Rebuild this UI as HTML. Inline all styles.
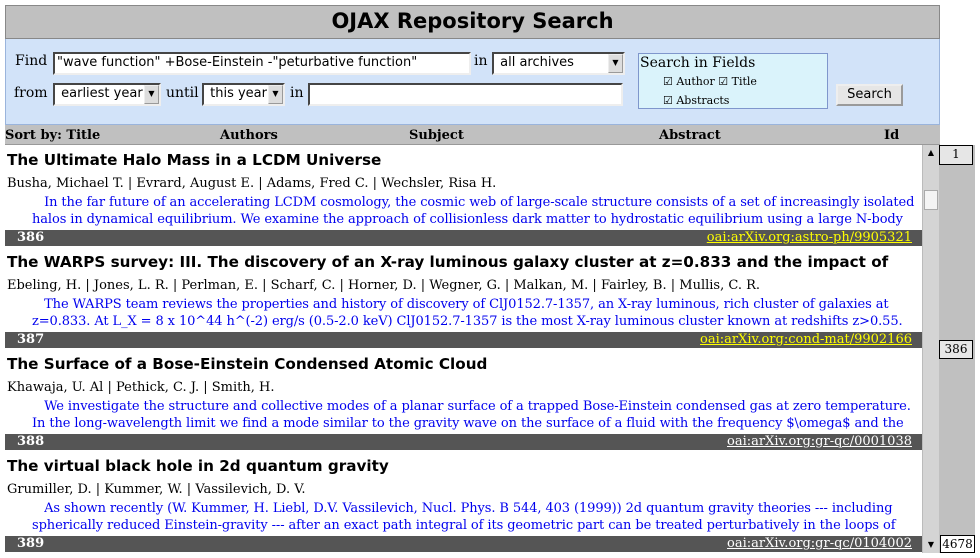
<!DOCTYPE html>
<html><head><meta charset="utf-8"><style>
*{margin:0;padding:0;box-sizing:border-box}
body{width:980px;height:558px;background:#fff;position:relative;overflow:hidden;font-family:"DejaVu Serif","Liberation Serif",serif;font-size:13px;color:#000}
.a{position:absolute;white-space:nowrap}
#hdr{left:5px;top:5px;width:935px;height:34px;background:#c0c0c0;border:1px solid #888;text-align:center;font:bold 21px "DejaVu Sans",sans-serif;line-height:31px}
#form{left:5px;top:39px;width:935px;height:86px;background:#d2e3f9;border:1px solid #9ab4dc;border-top:none}
.inp{position:absolute;background:#fff;border:2px inset #999;border-right-color:#eee;border-bottom-color:#eee;font:13px "DejaVu Sans",sans-serif;line-height:17px;padding-left:2px;white-space:nowrap;overflow:hidden}
.arr{position:absolute;right:0;top:0;width:15px;height:100%;background:#ddd;border:1px outset #eee;font-size:8px;text-align:center;line-height:16px}
.lbl{position:absolute;font-size:14px}
#sort{left:5px;top:125px;width:935px;height:20px;background:#c0c0c0;border-bottom:1px solid #999;font-weight:bold;font-size:13px}
#sort span{position:absolute;top:3px}
#res{left:5px;top:146px;width:917px;height:407px;overflow:hidden;background:#fff}
.rec{position:absolute;left:0;width:917px;height:103px}
.t{position:absolute;left:2px;top:5px;font:bold 15.2px "DejaVu Sans",sans-serif;white-space:nowrap}
.au{position:absolute;left:2px;top:30px;font-size:13px;white-space:nowrap}
.ab{position:absolute;left:27px;top:48px;color:#00e;font-size:13px;line-height:17px;white-space:nowrap;letter-spacing:-0.1px}
.bar{position:absolute;left:0;top:84px;width:917px;height:16px;background:#555;color:#fff}
.bar b{position:absolute;left:12px;top:0;font-size:13px;line-height:16px}
.bar u{position:absolute;right:10px;top:0;color:#ff0;font-size:13px;line-height:16px}
#sb{left:922px;top:145px;width:17px;height:408px;background:#d4d4d4;border-left:1px solid #bbb}
#rp{left:939px;top:145px;width:36px;height:408px;background:#c0c0c0}
.pg{position:absolute;background:#e6e6e6;border:1px solid #000;font-size:12px;text-align:center;line-height:17px}
</style></head><body>
<div class="a" id="hdr">OJAX Repository Search</div>
<div class="a" id="form">
 <div class="lbl" style="left:9px;top:14px">Find</div>
 <div class="inp" style="left:47px;top:13px;width:418px;height:23px">"wave function" +Bose-Einstein -"peturbative function"</div>
 <div class="lbl" style="left:468px;top:14px">in</div>
 <div class="inp" style="left:486px;top:13px;width:133px;height:23px">&nbsp;all archives<div class="arr">▼</div></div>
 <div class="lbl" style="left:8px;top:46px">from</div>
 <div class="inp" style="left:47px;top:44px;width:108px;height:23px">&nbsp;earliest year<div class="arr">▼</div></div>
 <div class="lbl" style="left:160px;top:46px">until</div>
 <div class="inp" style="left:196px;top:44px;width:83px;height:23px">&nbsp;this year<div class="arr">▼</div></div>
 <div class="lbl" style="left:284px;top:46px">in</div>
 <div class="inp" style="left:302px;top:44px;width:315px;height:23px"></div>
 <div style="position:absolute;left:632px;top:14px;width:190px;height:56px;background:#daf3fb;border:1px solid #7f96cc">
  <div style="position:absolute;left:1px;top:1px;font-size:14px">Search in Fields</div>
  <div style="position:absolute;left:24px;top:21px;font-size:11px">☑ Author ☑ Title</div>
  <div style="position:absolute;left:24px;top:40px;font-size:11px">☑ Abstracts</div>
 </div>
 <div style="position:absolute;left:830px;top:45px;width:67px;height:22px;background:#e6e6e6;border:2px outset #eee;font:13px 'DejaVu Sans',sans-serif;text-align:center;line-height:18px">Search</div>
</div>
<div class="a" id="sort"><span style="left:0">Sort by: Title</span><span style="left:215px">Authors</span><span style="left:404px">Subject</span><span style="left:654px">Abstract</span><span style="left:879px">Id</span></div>
<div class="a" id="res">
 <div class="rec" style="top:0">
  <div class="t">The Ultimate Halo Mass in a LCDM Universe</div>
  <div class="au">Busha, Michael T. | Evrard, August E. | Adams, Fred C. | Wechsler, Risa H.</div>
  <div class="ab">&nbsp;&nbsp;&nbsp;In the far future of an accelerating LCDM cosmology, the cosmic web of large-scale structure consists of a set of increasingly isolated<br>halos in dynamical equilibrium. We examine the approach of collisionless dark matter to hydrostatic equilibrium using a large N-body</div>
  <div class="bar"><b>386</b><u>oai:arXiv.org:astro-ph/9905321</u></div>
 </div>
 <div class="rec" style="top:102px">
  <div class="t">The WARPS survey: III. The discovery of an X-ray luminous galaxy cluster at z=0.833 and the impact of</div>
  <div class="au">Ebeling, H. | Jones, L. R. | Perlman, E. | Scharf, C. | Horner, D. | Wegner, G. | Malkan, M. | Fairley, B. | Mullis, C. R.</div>
  <div class="ab">&nbsp;&nbsp;&nbsp;The WARPS team reviews the properties and history of discovery of ClJ0152.7-1357, an X-ray luminous, rich cluster of galaxies at<br>z=0.833. At L_X = 8 x 10^44 h^(-2) erg/s (0.5-2.0 keV) ClJ0152.7-1357 is the most X-ray luminous cluster known at redshifts z&gt;0.55.</div>
  <div class="bar"><b>387</b><u>oai:arXiv.org:cond-mat/9902166</u></div>
 </div>
 <div class="rec" style="top:204px">
  <div class="t">The Surface of a Bose-Einstein Condensed Atomic Cloud</div>
  <div class="au">Khawaja, U. Al | Pethick, C. J. | Smith, H.</div>
  <div class="ab">&nbsp;&nbsp;&nbsp;We investigate the structure and collective modes of a planar surface of a trapped Bose-Einstein condensed gas at zero temperature.<br>In the long-wavelength limit we find a mode similar to the gravity wave on the surface of a fluid with the frequency $\omega$ and the</div>
  <div class="bar"><b>388</b><u style="color:#fff">oai:arXiv.org:gr-qc/0001038</u></div>
 </div>
 <div class="rec" style="top:306px">
  <div class="t">The virtual black hole in 2d quantum gravity</div>
  <div class="au">Grumiller, D. | Kummer, W. | Vassilevich, D. V.</div>
  <div class="ab">&nbsp;&nbsp;&nbsp;As shown recently (W. Kummer, H. Liebl, D.V. Vassilevich, Nucl. Phys. B 544, 403 (1999)) 2d quantum gravity theories --- including<br>spherically reduced Einstein-gravity --- after an exact path integral of its geometric part can be treated perturbatively in the loops of</div>
  <div class="bar"><b>389</b><u style="color:#fff">oai:arXiv.org:gr-qc/0104002</u></div>
 </div>
</div>
<div class="a" id="sb">
 <div style="position:absolute;left:1px;top:1px;width:14px;height:14px;font-size:8px;text-align:center;line-height:14px">▲</div>
 <div style="position:absolute;left:1px;top:45px;width:14px;height:20px;background:#f4f4f4;border:1px solid #aaa"></div>
 <div style="position:absolute;left:1px;top:393px;width:14px;height:14px;font-size:8px;text-align:center;line-height:14px">▼</div>
</div>
<div class="a" id="rp">
 <div class="pg" style="left:0;top:0;width:34px;height:20px">1</div>
 <div class="pg" style="left:0;top:195px;width:34px;height:19px">386</div>
 <div class="pg" style="left:1px;top:390px;width:35px;height:18px;background:#fff">4678</div>
</div>
</body></html>
